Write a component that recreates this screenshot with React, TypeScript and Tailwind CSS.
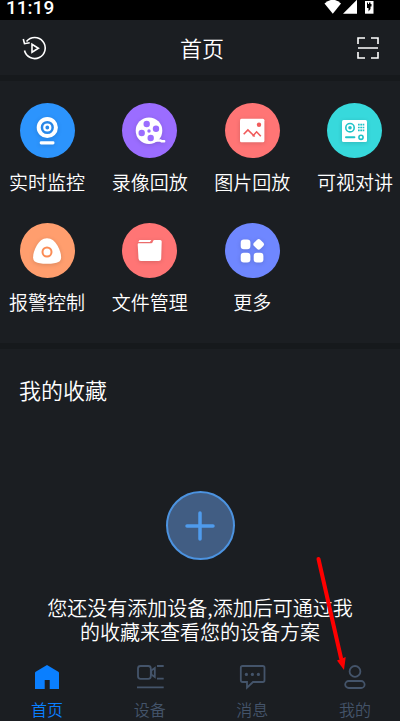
import type { ReactNode } from "react";

type Feature = {
  label: string;
  color: string;
  icon: ReactNode;
};

const features: Feature[] = [
  {
    label: "实时监控",
    color: "bg-[#2c94fd]",
    icon: (
      <>
        <circle cx="27.3" cy="24.5" r="8.6" fill="none" stroke="#fff" strokeWidth="4" />
        <circle cx="27.3" cy="24.5" r="3" fill="none" stroke="#fff" strokeWidth="2.2" />
        <rect x="19.7" y="38.3" width="14.8" height="3.2" rx="1.4" fill="#fff" />
      </>
    ),
  },
  {
    label: "录像回放",
    color: "bg-[#9b6dff]",
    icon: (
      <>
        <circle cx="27" cy="27.7" r="13.3" fill="#fff" />
        <path d="M34 37.5h4.5l1 .8h2.7" fill="none" stroke="#fff" strokeWidth="2.4" strokeLinecap="round" />
        <g fill="#9b6dff">
          <circle cx="24.7" cy="21" r="3.2" />
          <circle cx="34" cy="25.7" r="3.2" />
          <circle cx="28.7" cy="35" r="3.2" />
          <circle cx="19.7" cy="30" r="3.2" />
          <circle cx="27" cy="28" r="1.7" />
        </g>
      </>
    ),
  },
  {
    label: "图片回放",
    color: "bg-[#ff7575]",
    icon: (
      <>
        <rect x="15" y="15.7" width="24.4" height="23.6" rx="1.5" fill="#fff" />
        <circle cx="34" cy="21.7" r="2.2" fill="#f05a5a" />
        <path
          d="M18.7 31.3l4.2-4.3 6.8 6.5M27.6 33.2l4-4.4 4.2 4.4"
          fill="none"
          stroke="#f05a5a"
          strokeWidth="1.6"
        />
      </>
    ),
  },
  {
    label: "可视对讲",
    color: "bg-[#37d9dc]",
    icon: (
      <>
        <rect x="15" y="17" width="25" height="22" rx="1.5" fill="#fff" />
        <circle cx="23" cy="24.7" r="4.2" fill="none" stroke="#1fc3c8" strokeWidth="1.6" />
        <circle cx="23" cy="24.7" r="1.8" fill="#1fc3c8" />
        <path
          d="M31 21.7h6.4M31 24.5h6.4M31 27.3h6.4"
          stroke="#1fc3c8"
          strokeWidth="1.7"
          strokeDasharray="1.7 .6"
        />
        <path d="M19 34.2h8.4" stroke="#1fc3c8" strokeWidth="2" strokeLinecap="round" />
        <circle cx="34" cy="34.3" r="2.1" fill="none" stroke="#1fc3c8" strokeWidth="1.6" />
      </>
    ),
  },
  {
    label: "报警控制",
    color: "bg-[#ff9e6e]",
    icon: (
      <>
        <path
          d="M27 15.3c4.6 0 8 3 10.6 7.5 2.2 3.9 3.5 8.2 3.5 11.4 0 4.3-2.6 6.5-14.1 6.5s-13.9-2.2-13.9-6.5c0-3.2 1.3-7.5 3.5-11.4C19.2 18.3 22.4 15.3 27 15.3z"
          fill="#fff"
        />
        <circle cx="27" cy="29" r="4.5" fill="none" stroke="#fb8c55" strokeWidth="2" />
      </>
    ),
  },
  {
    label: "文件管理",
    color: "bg-[#ff7575]",
    icon: (
      <>
        <path d="M17.5 17h11.8l-1.4 2H16.4z" fill="#fff" />
        <path
          d="M15.7 21.5q0-1.2 1.2-1.2h12.3q1 0 1.4-1l.5-1.3q.4-1 1.4-1h5.700q1.500 0 1.500 1.500l-.5 17q-.1 2.500-2.600 2.500H19q-2.400 0-2.500-2.500z"
          fill="#fff"
        />
      </>
    ),
  },
  {
    label: "更多",
    color: "bg-[#6f87ff]",
    icon: (
      <g fill="#fff">
        <rect x="15.7" y="16.5" width="9.7" height="9.7" rx="3.2" />
        <rect x="29.3" y="17" width="8.8" height="8.8" rx="2.2" transform="rotate(45 33.7 21.4)" />
        <rect x="15.7" y="29.8" width="9.7" height="9.7" rx="3.2" />
        <rect x="28.7" y="29.8" width="9.7" height="9.7" rx="3.2" />
      </g>
    ),
  },
];

const tabs = [
  {
    label: "首页",
    active: true,
    icon: (
      <path
        d="M16 4l11.3 6.7q.7.5.7 1.3v16h-9.3v-9h-5v9H4V12q0-.8.7-1.3z"
        fill="currentColor"
      />
    ),
  },
  {
    label: "设备",
    active: false,
    icon: (
      <g fill="none" stroke="currentColor" strokeWidth="1.8">
        <rect x="4" y="5" width="12.8" height="12.8" rx="2.5" />
        <path d="M17.3 9.5l3.5-2.5v9l-3.5-2.5z" />
        <path d="M23 5h6.7M23 17.6h6.7M3 26.3h26.7" />
      </g>
    ),
  },
  {
    label: "消息",
    active: false,
    icon: (
      <>
        <path
          d="M6.5 5h20.3q1.7 0 1.7 1.7V19.3q0 1.7-1.7 1.7H17l-6 5.7V21H6.5q-1.7 0-1.7-1.7V6.7Q4.8 5 6.5 5z"
          fill="none"
          stroke="currentColor"
          strokeWidth="1.8"
        />
        <g fill="currentColor">
          <circle cx="10.4" cy="13.4" r="1.6" />
          <circle cx="16.4" cy="13.4" r="1.6" />
          <circle cx="22.4" cy="13.4" r="1.6" />
        </g>
      </>
    ),
  },
  {
    label: "我的",
    active: false,
    icon: (
      <g fill="none" stroke="currentColor" strokeWidth="1.8">
        <circle cx="16" cy="10.4" r="5.4" />
        <rect x="6.2" y="20" width="19.4" height="7" rx="3.5" />
      </g>
    ),
  },
];

function StatusBar() {
  return (
    <div className="flex h-5 items-start justify-between bg-black pl-1.5 pr-6">
      <span className="font-['Roboto',sans-serif] text-[19px] leading-4 font-medium">11:19</span>
      <svg width="52" height="14" viewBox="0 0 52 14" fill="#fff" aria-hidden="true">
        <path d="M0.5 3.5Q9 -4 17 3.5L8.8 13.7z" />
        <path d="M33 0v13.7H19L32.7 0z" />
        <path d="M41 1h8.5v12.7H41z" />
        <path d="M43 2.500h1v1.500h1V2.500h1.500V4h1v2.500h-1v2.500l-2 2.500V8H43z" fill="#000" />
      </svg>
    </div>
  );
}

function Header() {
  return (
    <header className="flex h-[55px] items-center justify-between px-4">
      <button aria-label="回放" className="flex size-9 items-center justify-center">
        <svg width="28" height="28" viewBox="0 0 28 28" fill="none" stroke="#fff" strokeWidth="1.6">
          <path d="M4.5 16.5A10.5 10.5 0 1 0 6.5 7.5" />
          <path d="M3.3 5l1.2 4.7 5.2-.9" />
          <path d="M12 10.2v8l6.4-4z" />
        </svg>
      </button>
      <h1 className="pb-0.5 text-[22px] leading-8 font-[350]">首页</h1>
      <button aria-label="扫一扫" className="flex size-8 items-center justify-center">
        <svg width="22" height="22" viewBox="0 0 22 22" fill="none" stroke="#fff" strokeWidth="1.6">
          <path d="M1 7V1h7M14 1h7v6M21 15v6h-7M8 21H1v-6M1 11h20" />
        </svg>
      </button>
    </header>
  );
}

export default function App() {
  return (
    <div className="flex min-h-screen flex-col bg-[#1b1e22] font-['Noto_Sans_CJK_SC',sans-serif] text-white">
      <StatusBar />
      <Header />

      {/* 功能入口 */}
      <section className="grid grid-cols-[repeat(4,78px)] justify-between gap-y-[26px] border-y-6 border-[#16191c] pt-[22px] pr-1.5 pb-[26px] pl-2">
        {features.map((item) => (
          <button key={item.label} className="flex flex-col items-center gap-2.5 pb-px">
            <span className={`size-[55px] rounded-full ${item.color}`}>
              <svg width="55" height="55" viewBox="0 0 55 55" className="drop-shadow-sm" aria-hidden="true">
                {item.icon}
              </svg>
            </span>
            <span className="text-[19px] leading-7 font-[350] whitespace-nowrap">{item.label}</span>
          </button>
        ))}
      </section>

      {/* 我的收藏 */}
      <main className="flex flex-1 flex-col pt-6 pb-2">
        <h2 className="px-[19px] text-[22px] leading-8 font-[350]">我的收藏</h2>
        <div className="mt-[86px] flex flex-col items-center">
          <button
            aria-label="添加设备"
            className="flex size-[69px] items-center justify-center rounded-full border-2 border-[#4c93e0] bg-[#415d83]"
          >
            <svg width="30" height="30" viewBox="0 0 30 30" stroke="#4f9bec" strokeWidth="3.5" strokeLinecap="round">
              <path d="M15 2v26M2 15h26" />
            </svg>
          </button>
          <p className="mt-9 px-10 text-center text-[20px] leading-6 font-[350]">
            您还没有添加设备,添加后可通过我的收藏来查看您的设备方案
          </p>
        </div>
      </main>

      {/* 底部导航 */}
      <nav className="flex justify-between pt-2 pr-1.5 pl-2">
        {tabs.map((tab) => (
          <a
            key={tab.label}
            href="#"
            className={`relative flex w-[78px] flex-col items-center gap-1.5 pb-0.5 ${
              tab.active ? "text-[#0a7fff]" : "text-[#44546a]"
            }`}
          >
            <svg width="32" height="32" viewBox="0 0 32 32" aria-hidden="true">
              {tab.icon}
            </svg>
            <span className="text-base leading-5 font-[350]">{tab.label}</span>
            {tab.label === "我的" && (
              <svg
                className="pointer-events-none absolute bottom-[50px] left-0 overflow-visible"
                width="34"
                height="116"
                viewBox="0 0 34 116"
                fill="#f00"
                aria-hidden="true"
              >
                <path d="M2.5 4L25 103" stroke="#f00" strokeWidth="4" strokeLinecap="round" />
                <path d="M21 105.5l8.7-3.5-1.7 13z" />
              </svg>
            )}
          </a>
        ))}
      </nav>
    </div>
  );
}
